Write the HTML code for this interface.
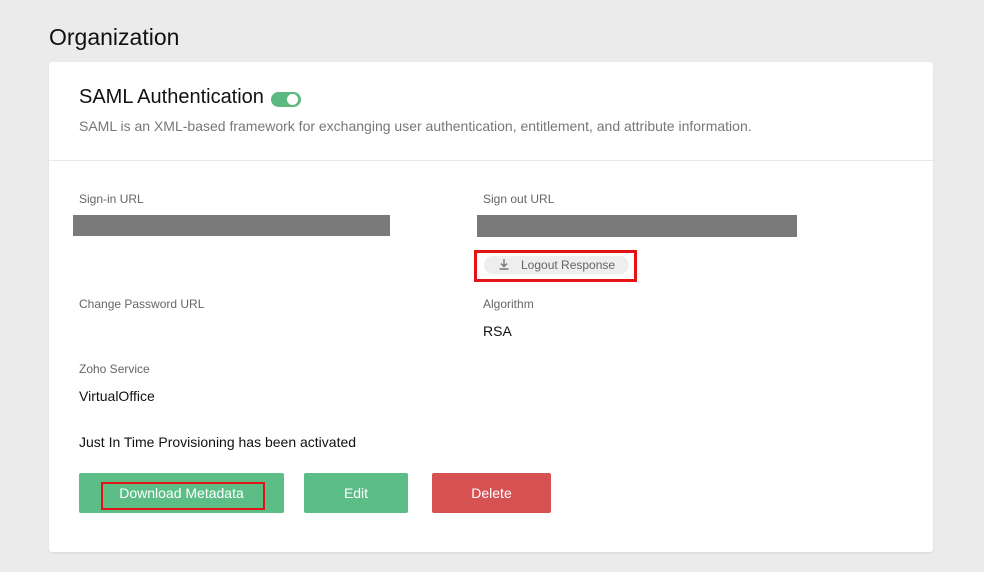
<!DOCTYPE html>
<html><head><style>
body{margin:0;width:984px;height:572px;background:#ebebec;font-family:"Liberation Sans",sans-serif;position:relative;overflow:hidden}
.a{position:absolute}
</style></head><body>
<div class="a" style="left:49px;top:24px;font-size:23px;color:#111">Organization</div>
<div class="a" style="left:49px;top:62px;width:884px;height:490px;background:#fff;border-radius:3px;box-shadow:0 1px 2px rgba(0,0,0,.08)"></div>
<div class="a" style="left:79px;top:86px;font-size:20px;color:#111">SAML Authentication</div>
<div class="a" style="left:271px;top:92px;width:30px;height:15px;border-radius:8px;background:#5cb97f"></div>
<div class="a" style="left:287px;top:94px;width:11px;height:11px;border-radius:50%;background:#fff"></div>
<div class="a" style="left:79px;top:118px;font-size:14px;color:#777">SAML is an XML-based framework for exchanging user authentication, entitlement, and attribute information.</div>
<div class="a" style="left:49px;top:160px;width:884px;height:1px;background:#e8e8e8"></div>
<div class="a" style="left:79px;top:192px;font-size:12px;color:#666">Sign-in URL</div>
<div class="a" style="left:73px;top:215px;width:317px;height:21px;background:#7a7a7a"></div>
<div class="a" style="left:483px;top:192px;font-size:12px;color:#666">Sign out URL</div>
<div class="a" style="left:477px;top:215px;width:320px;height:22px;background:#7a7a7a"></div>
<div class="a" style="left:474px;top:250px;width:157px;height:26px;border:3px solid #e41414"></div>
<div class="a" style="left:484px;top:256px;width:145px;height:18px;background:#eee;border-radius:9px"></div>
<svg class="a" style="left:497px;top:257px" width="14" height="14" viewBox="0 0 14 14"><path d="M7 2v7M4 6.5l3 3 3-3M2.5 12h9" stroke="#777" stroke-width="1.4" fill="none"/></svg>
<div class="a" style="left:521px;top:258px;font-size:12px;color:#666">Logout Response</div>
<div class="a" style="left:79px;top:297px;font-size:12px;color:#666">Change Password URL</div>
<div class="a" style="left:483px;top:297px;font-size:12px;color:#666">Algorithm</div>
<div class="a" style="left:483px;top:323px;font-size:14px;color:#111">RSA</div>
<div class="a" style="left:79px;top:362px;font-size:12px;color:#666">Zoho Service</div>
<div class="a" style="left:79px;top:388px;font-size:14px;color:#111">VirtualOffice</div>
<div class="a" style="left:79px;top:434px;font-size:14px;color:#111">Just In Time Provisioning has been activated</div>
<div class="a" style="left:79px;top:473px;width:205px;height:40px;background:#5cbd86;border-radius:2px"></div>
<div class="a" style="left:101px;top:482px;width:160px;height:24px;border:2px solid #e41414"></div>
<div class="a" style="left:79px;top:485px;width:205px;text-align:center;font-size:14px;color:#fff">Download Metadata</div>
<div class="a" style="left:304px;top:473px;width:104px;height:40px;background:#5cbd86;border-radius:2px;color:#fff;font-size:14px;text-align:center;line-height:40px">Edit</div>
<div class="a" style="left:432px;top:473px;width:119px;height:40px;background:#d65252;border-radius:2px;color:#fff;font-size:14px;text-align:center;line-height:40px">Delete</div>
</body></html>
